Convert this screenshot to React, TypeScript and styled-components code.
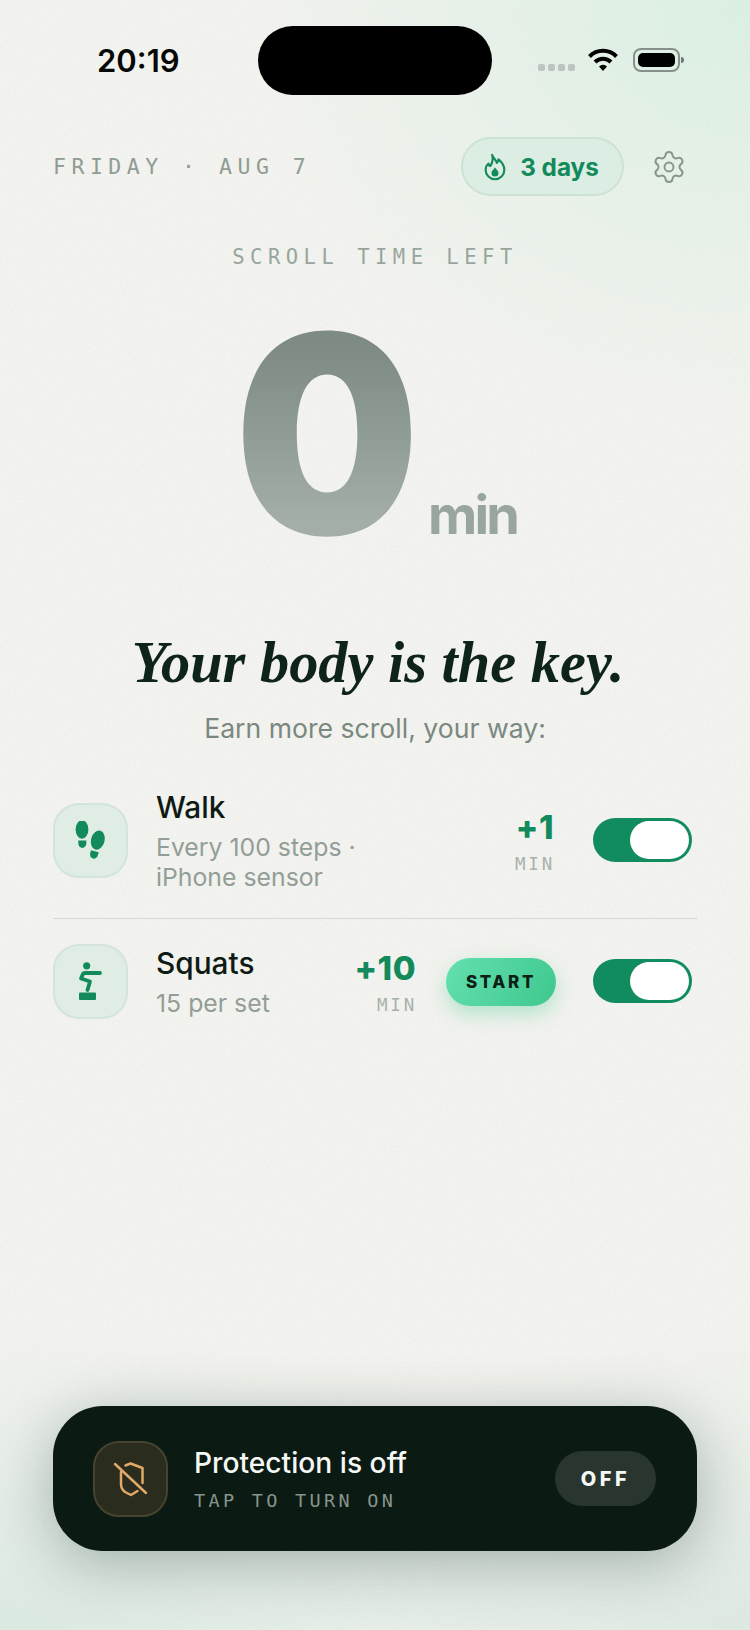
import React from "react";
import styled, { createGlobalStyle } from "styled-components";
import { Settings } from "lucide-react";

const sans = `Inter, "Liberation Sans", sans-serif`;
const mono = `"DejaVu Sans Mono", "Liberation Mono", monospace`;

const grain = `url("data:image/svg+xml,%3Csvg xmlns='http://www.w3.org/2000/svg' width='300' height='300'%3E%3Cfilter id='n'%3E%3CfeTurbulence type='fractalNoise' baseFrequency='0.55' numOctaves='2' stitchTiles='stitch'/%3E%3CfeColorMatrix values='0 0 0 0 0.35 0 0 0 0 0.4 0 0 0 0 0.35 0 0 0 0.5 -0.12'/%3E%3C/filter%3E%3Crect width='300' height='300' filter='url(%23n)' opacity='0.22'/%3E%3C/svg%3E")`;

const GlobalStyle = createGlobalStyle`
  html, body {
    margin: 0;
    padding: 0;
    background: #f2f3ee;
  }
  * {
    box-sizing: border-box;
  }
`;

const Screen = styled.div`
  width: 750px;
  height: 1630px;
  padding: 26px 53px 79px;
  display: flex;
  flex-direction: column;
  overflow: hidden;
  font-family: ${sans};
  background:
    ${grain},
    radial-gradient(ellipse 500px 420px at 100% 0, #dcf1e4 0%, rgba(220, 241, 228, 0) 100%),
    radial-gradient(ellipse 700px 300px at 0% 100%, #dcebe3 0%, rgba(220, 235, 227, 0) 100%),
    radial-gradient(ellipse 500px 300px at 100% 100%, #dfeae4 0%, rgba(223, 234, 228, 0) 100%),
    #f4f4f0;
`;

const StatusBar = styled.div`
  height: 69px;
  display: flex;
  align-items: center;
`;

const Time = styled.div`
  width: 205px;
  padding-left: 44px;
  font-size: 31px;
  font-weight: 600;
  color: #060807;
`;

const Island = styled.div`
  width: 234px;
  height: 69px;
  border-radius: 35px;
  background: #000;
`;

const StatusIcons = styled.div`
  flex: 1;
  display: flex;
  align-items: center;
  justify-content: flex-end;
  padding-right: 17px;
  margin-top: -2px;
`;

const Dots = styled.div`
  display: flex;
  gap: 3px;
  margin: 15px 12px 0 0;
`;

const Dot = styled.div`
  width: 7px;
  height: 7px;
  border-radius: 2px;
  background: #bcc5bf;
`;

const Battery = styled.div`
  position: relative;
  width: 47px;
  height: 24px;
  margin-left: 14px;
  padding: 3px;
  border: 2px solid #87908b;
  border-radius: 8px;
  &::after {
    content: "";
    position: absolute;
    right: -6px;
    top: 7px;
    width: 3px;
    height: 6px;
    border-radius: 0 3px 3px 0;
    background: #6f7873;
  }
`;

const BatteryFill = styled.div`
  height: 100%;
  border-radius: 5px;
  background: #000;
`;

const Header = styled.div`
  margin-top: 42px;
  height: 59px;
  display: flex;
  align-items: center;
  justify-content: space-between;
  padding-right: 10px;
`;

const DateLabel = styled.div`
  font-family: ${mono};
  font-size: 21.5px;
  letter-spacing: 5.5px;
  color: #8f9c94;
  white-space: pre;
`;

const HeaderRight = styled.div`
  display: flex;
  align-items: center;
  gap: 27px;
  color: #87958c;
`;

const StreakPill = styled.div`
  width: 163px;
  height: 59px;
  padding-right: 5px;
  display: flex;
  align-items: center;
  justify-content: center;
  gap: 11px;
  border-radius: 30px;
  background: #dcede3;
  border: 2px solid #cbe2d5;
  font-size: 24.3px;
  font-weight: 700;
  color: #128a5c;
`;

const ScrollLabel = styled.div`
  margin-top: 50px;
  text-align: center;
  font-family: ${mono};
  font-size: 20.5px;
  line-height: 22px;
  letter-spacing: 5.5px;
  color: #98a59d;
`;

const Hero = styled.div`
  display: flex;
  justify-content: center;
  align-items: baseline;
  margin-top: 21px;
  height: 290px;
  padding-right: 4px;
`;

const BigNumber = styled.div`
  font-size: 276px;
  font-weight: 900;
  line-height: 290px;
  margin-right: -1px;
  transform: scaleX(0.945);
  background: linear-gradient(180deg, #7d8b82 20%, #a2aea6 80%);
  -webkit-background-clip: text;
  background-clip: text;
  color: transparent;
`;

const Unit = styled.div`
  margin-left: 4px;
  font-size: 54px;
  font-weight: 700;
  letter-spacing: -2.8px;
  color: #98a69e;
`;

const Heading = styled.h1`
  margin: 51px 0 0;
  padding-left: 6px;
  text-align: center;
  font-family: "Liberation Serif", serif;
  font-style: italic;
  font-weight: 700;
  font-size: 58.4px;
  line-height: 66px;
  color: #0f2419;
`;

const Subheading = styled.div`
  margin-top: 15px;
  text-align: center;
  font-size: 26.6px;
  line-height: 34px;
  color: #7b8880;
`;

const List = styled.div`
  margin-top: 44px;
`;

const Row = styled.div<{ $divider?: boolean; $first?: boolean }>`
  display: flex;
  align-items: center;
  padding: ${(p) => (p.$first ? "0 5px 26px 0" : "25px 5px 0 0")};
  border-bottom: ${(p) => (p.$divider ? "1px solid #d6d9d3" : "none")};
`;

const IconTile = styled.div`
  width: 75px;
  height: 75px;
  flex: none;
  display: flex;
  align-items: center;
  justify-content: center;
  border-radius: 26px;
  background: #e0ede5;
  border: 2px solid #d3e5da;
`;

const RowText = styled.div`
  margin-left: 28px;
  flex: 1;
  min-width: 0;
`;

const RowTitle = styled.div`
  font-size: 29.8px;
  font-weight: 550;
  line-height: 36px;
  color: #0e1a14;
`;

const RowSub = styled.div`
  margin-top: 7px;
  font-size: 24.8px;
  line-height: 30px;
  color: #929e97;
`;

const Reward = styled.div`
  padding-top: 4px;
  text-align: right;
`;

const RewardValue = styled.div`
  font-size: 33px;
  font-weight: 800;
  line-height: 36px;
  letter-spacing: 0.5px;
  color: #128a5c;
`;

const RewardUnit = styled.div`
  margin-top: 7px;
  font-family: ${mono};
  font-size: 17.5px;
  line-height: 24px;
  letter-spacing: 2.8px;
  margin-right: -1px;
  color: #a8b1ab;
`;

const StartButton = styled.div`
  width: 110px;
  height: 48px;
  margin-left: 30px;
  display: flex;
  align-items: center;
  justify-content: center;
  border-radius: 24px;
  background: linear-gradient(120deg, #63e0ae, #3fc78f);
  box-shadow: 0 8px 20px rgba(63, 199, 143, 0.35);
  font-size: 17px;
  font-weight: 800;
  letter-spacing: 2.6px;
  color: #0b1f15;
`;

const Toggle = styled.div<{ $gap: number }>`
  width: 99px;
  height: 44px;
  flex: none;
  margin-left: ${(p) => p.$gap}px;
  margin-top: -2px;
  padding: 3px;
  display: flex;
  justify-content: flex-end;
  border-radius: 22px;
  background: #118c5f;
`;

const Thumb = styled.div`
  width: 59px;
  height: 38px;
  border-radius: 19px;
  background: #fff;
`;

const ProtectionBar = styled.div`
  margin-top: auto;
  height: 145px;
  display: flex;
  align-items: center;
  padding: 0 41px 0 40px;
  border-radius: 50px;
  background: #0b1a12;
  box-shadow: 0 12px 60px rgba(11, 40, 25, 0.3);
`;

const ShieldTile = styled.div`
  width: 75px;
  height: 76px;
  flex: none;
  display: flex;
  align-items: center;
  justify-content: center;
  border-radius: 26px;
  background: #2a2c1e;
  border: 2px solid #46432f;
`;

const BarText = styled.div`
  margin-left: 26px;
  flex: 1;
  padding-top: 5px;
`;

const BarTitle = styled.div`
  font-size: 28.2px;
  font-weight: 500;
  line-height: 36px;
  margin-top: -4px;
  color: #f6f8f6;
`;

const BarSub = styled.div`
  margin-top: 8px;
  font-family: ${mono};
  font-size: 18.5px;
  line-height: 24px;
  letter-spacing: 3.3px;
  color: #87958c;
`;

const OffPill = styled.div`
  width: 101px;
  height: 55px;
  display: flex;
  align-items: center;
  justify-content: center;
  border-radius: 28px;
  background: #29352f;
  font-size: 20px;
  font-weight: 800;
  letter-spacing: 3.6px;
  color: #f6f8f6;
`;

const Wifi = () => (
  <svg width="32" height="25" viewBox="0 0 32 25" fill="none" stroke="#000" strokeWidth="4">
    <path d="M2.5 9.5a19 19 0 0 1 27 0" />
    <path d="M8 15a11.5 11.5 0 0 1 16 0" />
    <path d="M12 19.5l4 4.5 4-4.5a5.5 5.5 0 0 0-8 0z" fill="#000" stroke="none" />
  </svg>
);

const Flame = () => (
  <svg width="28" height="28" viewBox="0 0 24 24" fill="none" stroke="#128a5c" strokeWidth="1.800" strokeLinejoin="round">
    <path d="M9.5 1.5c1 3.5 3.5 4 4 7 1-.8 1.5-1.8 1.500-3 3 2.500 5 5.500 5 9a8 8 0 0 1-16 0c0-2.500 1.200-4.500 2.500-5.500 0 1 .5 2 1.500 2.200C9.500 9 10.500 5 9.500 1.500z" />
    <path d="M12 12.500c1.300 1.800 3 2.800 3 4.700a3 3 0 0 1-6 0c0-1.900 1.700-2.900 3-4.700z" fill="#128a5c" stroke="none" />
  </svg>
);

const Footsteps = () => (
  <svg width="40" height="40" viewBox="10 22 40 40" fill="#128a5c">
    <ellipse cx="21" cy="30.500" rx="6.400" ry="9.200" />
    <path d="M17.300 41.500h8v2.800a4 4.700 0 0 1-8 0z" />
    <g transform="rotate(15 35.500 46)">
      <ellipse cx="35.500" cy="41" rx="6.800" ry="9.700" />
      <path d="M31.500 52.500h8v2.800a4 4.700 0 0 1-8 0z" />
    </g>
  </svg>
);

const Squat = () => (
  <svg width="40" height="44" viewBox="12 10 40 44" fill="none">
    <circle cx="27.700" cy="15.800" r="3.600" fill="#128a5c" />
    <path
      d="M41 23H26.500Q24 23 23.500 25L22 28.500L31 31.500L28.500 40"
      stroke="#128a5c"
      strokeWidth="3.800"
      strokeLinecap="round"
      strokeLinejoin="round"
    />
    <rect x="20" y="42.500" width="17" height="7.500" rx="1" fill="#128a5c" />
  </svg>
);

const ShieldOff = () => (
  <svg width="40" height="42" viewBox="10 8 40 42" fill="none" stroke="#e0a967" strokeWidth="2.500" strokeLinecap="round" strokeLinejoin="round">
    <path d="M24.500 15.500L29.500 13.500L41.500 18V33" />
    <path d="M36.500 41L30 45L24 42Q20 39 20 34V22" />
    <path d="M14 14L45 43" />
  </svg>
);

const App: React.FC = () => {
  return (
    <Screen>
      <GlobalStyle />
      <StatusBar>
        <Time>20:19</Time>
        <Island />
        <StatusIcons>
          <Dots>
            {[0, 1, 2, 3].map((d) => (
              <Dot key={d} />
            ))}
          </Dots>
          <Wifi />
          <Battery>
            <BatteryFill />
          </Battery>
        </StatusIcons>
      </StatusBar>

      <Header>
        <DateLabel>FRIDAY · AUG 7</DateLabel>
        <HeaderRight>
          <StreakPill>
            <Flame />
            3 days
          </StreakPill>
          <Settings size={36} strokeWidth={1.3} />
        </HeaderRight>
      </Header>

      <ScrollLabel>SCROLL TIME LEFT</ScrollLabel>

      <Hero>
        <BigNumber>0</BigNumber>
        <Unit>min</Unit>
      </Hero>

      <Heading>Your body is the key.</Heading>
      <Subheading>Earn more scroll, your way:</Subheading>

      <List>
        <Row $first $divider>
          <IconTile>
            <Footsteps />
          </IconTile>
          <RowText>
            <RowTitle>Walk</RowTitle>
            <RowSub>
              Every 100 steps ·
              <br />
              iPhone sensor
            </RowSub>
          </RowText>
          <Reward>
            <RewardValue>+1</RewardValue>
            <RewardUnit>MIN</RewardUnit>
          </Reward>
          <Toggle $gap={39}>
            <Thumb />
          </Toggle>
        </Row>
        <Row>
          <IconTile>
            <Squat />
          </IconTile>
          <RowText>
            <RowTitle>Squats</RowTitle>
            <RowSub>15 per set</RowSub>
          </RowText>
          <Reward>
            <RewardValue>+10</RewardValue>
            <RewardUnit>MIN</RewardUnit>
          </Reward>
          <StartButton>START</StartButton>
          <Toggle $gap={37}>
            <Thumb />
          </Toggle>
        </Row>
      </List>

      <ProtectionBar>
        <ShieldTile>
          <ShieldOff />
        </ShieldTile>
        <BarText>
          <BarTitle>Protection is off</BarTitle>
          <BarSub>TAP TO TURN ON</BarSub>
        </BarText>
        <OffPill>OFF</OffPill>
      </ProtectionBar>
    </Screen>
  );
};

export default App;
